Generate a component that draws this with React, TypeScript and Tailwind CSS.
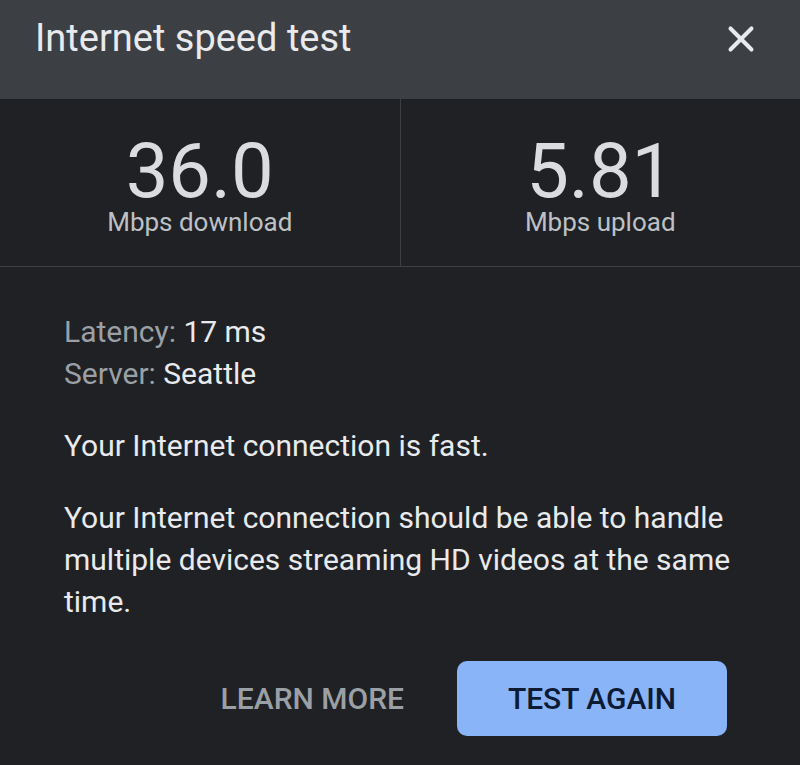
import { X } from "lucide-react";

const Stat = ({ value, label }: { value: string; label: string }) => (
  <div className="flex flex-1 flex-col items-center pt-[34px]">
    <div className="text-[76px] leading-[76px] text-[#dadce0]">{value}</div>
    <div className="text-[26px] leading-[26px] text-[#bdc1c6]">{label}</div>
  </div>
);

export default function App() {
  return (
    <div className="h-[765px] w-[800px] overflow-hidden bg-[#202124] font-['Roboto',sans-serif]">
      {/* header */}
      <div className="flex h-[99px] items-start justify-between bg-[#3c3f43] pl-[35px] pr-[38px] pt-[15px]">
        <h1 className="text-[38px] leading-[46px] text-[#e8eaed]">Internet speed test</h1>
        <button className="mt-[3px] text-[#e8eaed]">
          <X size={42} strokeWidth={2.3} />
        </button>
      </div>

      {/* results */}
      <div className="flex h-[168px] border-b border-[#3c4043]">
        <Stat value="36.0" label="Mbps download" />
        <div className="w-px bg-[#3c4043]" />
        <Stat value="5.81" label="Mbps upload" />
      </div>

      {/* details */}
      <div className="pl-[64px] pr-[40px] pt-[44px] text-[30px] leading-[42px] text-[#e8eaed]">
        <p>
          <span className="text-[#9aa0a6]">Latency:</span> 17 ms
        </p>
        <p>
          <span className="text-[#9aa0a6]">Server:</span> Seattle
        </p>
        <p className="mt-[30px]">Your Internet connection is fast.</p>
        <p className="mt-[30px]">
          Your Internet connection should be able to handle multiple devices streaming HD videos at the same time.
        </p>
      </div>

      {/* actions */}
      <div className="mt-[38px] flex items-center justify-end gap-[53px] pr-[73px]">
        <button className="text-[30px] font-medium text-[#9aa0a6]">LEARN MORE</button>
        <button className="flex h-[75px] w-[270px] items-center justify-center rounded-[10px] bg-[#8ab4f8] text-[30px] font-medium text-[#0d1a33]">
          TEST AGAIN
        </button>
      </div>
    </div>
  );
}
